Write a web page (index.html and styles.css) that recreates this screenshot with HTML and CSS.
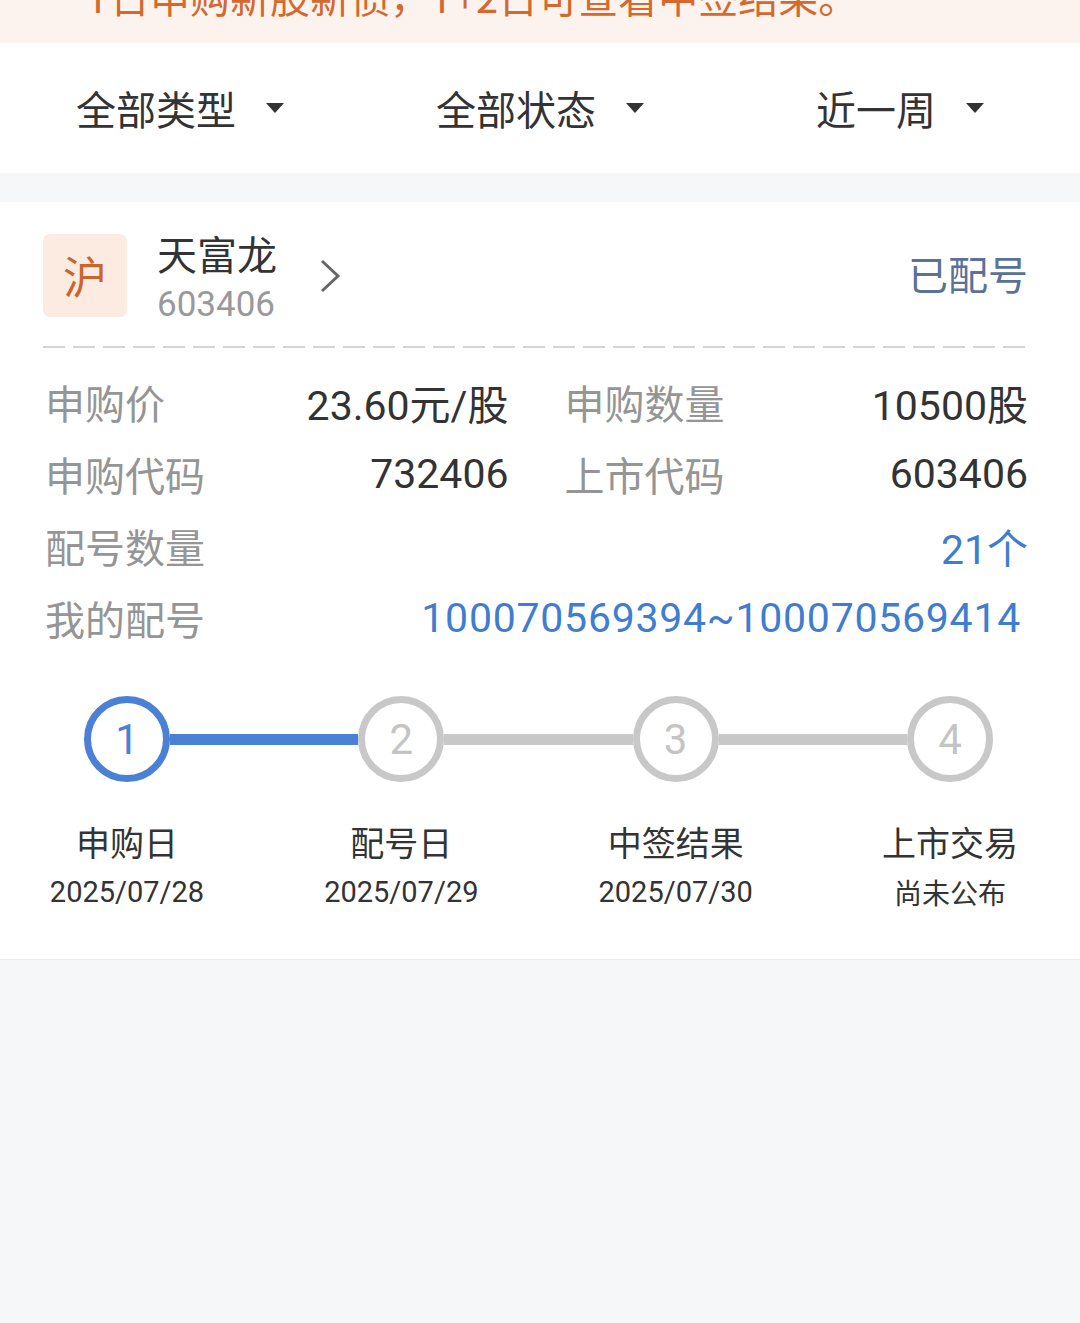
FILE: index.html
```html
<!DOCTYPE html>
<html lang="zh-CN">
<head>
<meta charset="utf-8">
<link rel="stylesheet" href="styles.css">
</head>
<body>
<div class="banner"><div class="banner-text">T日申购新股新债，T+2日可查看中签结果。</div></div>
<div class="filters">
  <div class="filter"><span>全部类型</span><i class="caret"></i></div>
  <div class="filter"><span>全部状态</span><i class="caret"></i></div>
  <div class="filter"><span>近一周</span><i class="caret"></i></div>
</div>
<div class="spacer"></div>
<div class="card">
  <div class="head">
    <div class="badge">沪</div>
    <div class="title">
      <div class="name">天富龙</div>
      <div class="code">603406</div>
    </div>
    <svg class="chev" width="22" height="34" viewBox="0 0 22 34"><polyline points="3,2 19,17 3,32" fill="none" stroke="#666" stroke-width="3"/></svg>
    <div class="status">已配号</div>
  </div>
  <div class="dash"></div>
  <div class="rows">
    <div class="row half">
      <div class="cell"><span class="lab">申购价</span><span class="val">23.60元/股</span></div>
      <div class="cell"><span class="lab">申购数量</span><span class="val">10500股</span></div>
    </div>
    <div class="row half">
      <div class="cell"><span class="lab">申购代码</span><span class="val">732406</span></div>
      <div class="cell"><span class="lab">上市代码</span><span class="val">603406</span></div>
    </div>
    <div class="row">
      <div class="cell"><span class="lab">配号数量</span><span class="val blue">21个</span></div>
    </div>
    <div class="row">
      <div class="cell"><span class="lab">我的配号</span><span class="val blue range">100070569394~100070569414</span></div>
    </div>
  </div>
  <div class="steps">
    <div class="circle on">1</div><div class="line on"></div>
    <div class="circle">2</div><div class="line"></div>
    <div class="circle">3</div><div class="line"></div>
    <div class="circle">4</div>
  </div>
  <div class="labels">
    <div class="lbl"><div class="t">申购日</div><div class="d">2025/07/28</div></div>
    <div class="lbl"><div class="t">配号日</div><div class="d">2025/07/29</div></div>
    <div class="lbl"><div class="t">中签结果</div><div class="d">2025/07/30</div></div>
    <div class="lbl"><div class="t">上市交易</div><div class="d cn">尚未公布</div></div>
  </div>
</div>
</body>
</html>
```
FILE: styles.css
```css
* { box-sizing: border-box; }
html, body { margin: 0; padding: 0; }
body {
  width: 1080px;
  min-height: 1323px;
  background: #f6f7f9;
  font-family: "Noto Sans CJK SC", "Noto Sans", sans-serif;
  color: #333;
}
.banner {
  height: 43px;
  overflow: hidden;
  background: #fdf3ee;
}
.banner-text {
  margin-top: -24px;
  padding-left: 86px;
  font-size: 40px;
  line-height: 40px;
  color: #d26a30;
  white-space: nowrap;
}
.filters {
  height: 130px;
  background: #fff;
  display: grid;
  grid-template-columns: repeat(3, 1fr);
  align-items: center;
}
.filter {
  display: flex;
  justify-content: center;
  align-items: center;
  gap: 30px;
  font-size: 40px;
  line-height: 40px;
  color: #333;
}
.caret {
  display: block;
  width: 0; height: 0;
  border-left: 9px solid transparent;
  border-right: 9px solid transparent;
  border-top: 10px solid #333;
}
.spacer { height: 29px; }
.card {
  background: #fff;
  padding: 31px 52px 0 43px;
  height: 758px;
  border-bottom: 1px solid #eceef0;
}
.head {
  display: flex;
  align-items: center;
  height: 84px;
}
.badge {
  width: 84px; height: 83px;
  border-radius: 7px;
  background: #fcebe1;
  color: #c9642e;
  font-size: 44px;
  display: flex; align-items: center; justify-content: center;
}
.title { margin-left: 30px; display: flex; flex-direction: column; margin-top: 0; }
.name { font-size: 40px; line-height: 46px; color: #333; }
.code { font-family: Roboto, sans-serif; font-size: 35px; line-height: 42px; color: #999; margin-top: 8px; margin-bottom: -6px; }
.chev { margin-left: 42px; margin-top: 2px; }
.status { margin-left: auto; font-size: 40px; color: #5a7299; margin-top: -4px; }
.dash {
  margin-top: 29px;
  height: 2px;
  background-image: linear-gradient(to right, #d4d4d4 0 22px, transparent 22px 30px);
  background-size: 30px 2px;
}
.rows { margin-top: 18px; }
.row { height: 72px; display: flex; gap: 54px; align-items: center; }
.cell { flex: 1; display: flex; justify-content: space-between; align-items: center; }
.lab { font-size: 40px; color: #959595; padding-left: 2px; }
.val { font-family: Roboto, "Noto Sans CJK SC", sans-serif; font-size: 41px; color: #333; }
.val.blue { color: #3f7dd1; }
.range { padding-right: 7px; letter-spacing: 0.75px; }
.steps {
  margin-top: 42px;
  margin-left: 41px;
  width: 909px;
  display: flex;
  align-items: center;
}
.circle {
  width: 86px; height: 86px;
  border-radius: 50%;
  border: 7px solid #c8c8c8;
  color: #c4c4c4;
  font-family: Roboto, sans-serif;
  font-size: 42px;
  display: flex; align-items: center; justify-content: center;
  flex: none;
}
.circle.on { border-color: #4a80d6; color: #4a80d6; }
.line { flex: 1; height: 11px; background: #c8c8c8; }
.line.on { background: #4a80d6; }
.labels {
  margin-top: 36px;
  margin-left: -36px;
  width: 1063px;
  display: flex;
  justify-content: space-between;
}
.lbl { width: 240px; text-align: center; }
.t { font-size: 34px; line-height: 48px; color: #333; }
.d { font-family: Roboto, sans-serif; font-size: 29px; line-height: 40px; color: #333; margin-top: 6px; }
.d.cn { font-family: "Noto Sans CJK SC", sans-serif; font-size: 28px; }
```
